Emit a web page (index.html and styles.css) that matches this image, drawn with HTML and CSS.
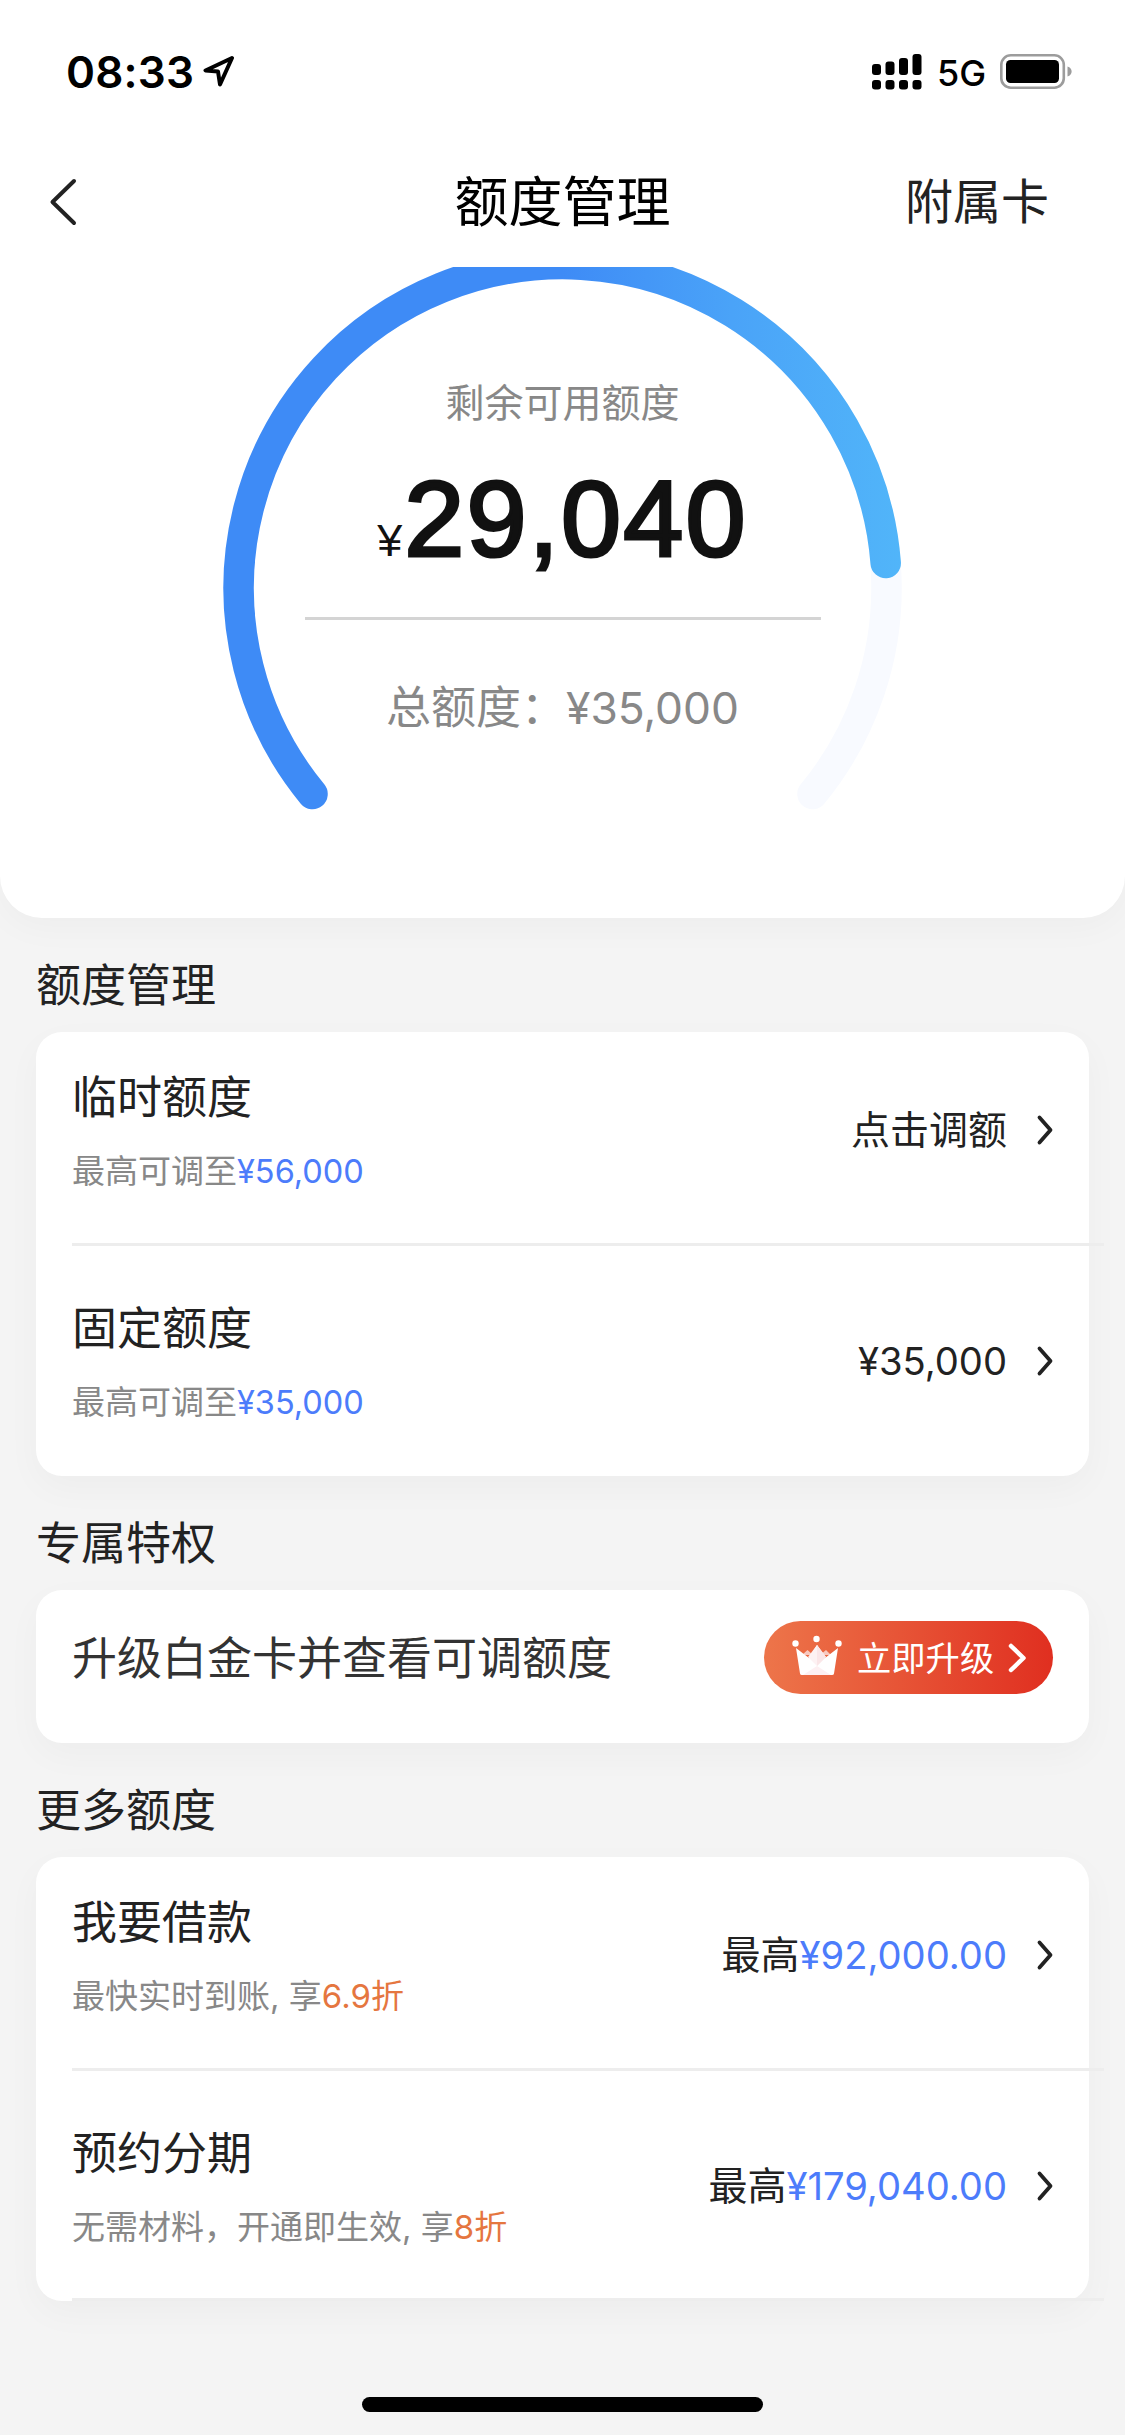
FILE: index.html
```html
<!DOCTYPE html>
<html lang="zh-CN">
<head>
<meta charset="utf-8">
<title>额度管理</title>
<link rel="stylesheet" href="styles.css">
</head>
<body>
<header class="top">
  <div class="status">
    <span class="time">08:33</span>
    <svg class="locate" width="32" height="32" viewBox="0 0 32 32"><path d="M29 3 2.500 15.500 15 16.500 17 29.500Z" fill="none" stroke="#000" stroke-width="4" stroke-linejoin="round"/></svg>
    <svg class="signal" width="50" height="36" viewBox="0 0 50 36">
      <rect x="0" y="10" width="9" height="11" rx="3"/><rect x="13.500" y="7.500" width="9" height="13.500" rx="3"/><rect x="27" y="4" width="9" height="17" rx="3"/><rect x="40.500" y="0" width="9" height="21" rx="3"/>
      <rect x="0" y="26" width="9" height="9.500" rx="3"/><rect x="13.500" y="26" width="9" height="9.500" rx="3"/><rect x="27" y="26" width="9" height="9.500" rx="3"/><rect x="40.500" y="26" width="9" height="9.500" rx="3"/>
    </svg>
    <span class="net">5G</span>
    <svg class="battery" width="73" height="36" viewBox="0 0 73 36">
      <rect x="1.300" y="1.300" width="62.500" height="32.400" rx="9.500" fill="none" stroke="#9c9c9c" stroke-width="2.600"/>
      <rect x="6" y="6" width="53" height="23" rx="4.500"/>
      <path d="M67.500 12.500c5.500 1.500 5.500 8.500 0 10z" fill="#9c9c9c"/>
    </svg>
  </div>
  <nav class="nav">
    <svg class="back" width="30" height="50" viewBox="0 0 30 50"><path d="M26 4 4.500 25 26 46" fill="none" stroke="#222" stroke-width="4" stroke-linecap="round" stroke-linejoin="round"/></svg>
    <h1 class="title">额度管理</h1>
    <a class="extra">附属卡</a>
  </nav>
  <section class="gauge">
    <svg class="ring" width="1125" height="560" viewBox="0 267 1125 560" fill="none" stroke-width="30.500" stroke-linecap="round">
      <defs><linearGradient id="arc" gradientUnits="userSpaceOnUse" x1="562" y1="0" x2="901" y2="0"><stop offset="0" stop-color="#3e8bf6"/><stop offset=".5" stop-color="#4aa3f8"/><stop offset="1" stop-color="#51b5f9"/></linearGradient></defs>
      <path d="M312.500 794A324 324 0 1 1 812.500 794" stroke="#f8faff"/>
      <path d="M312.500 794A324 324 0 1 1 885.700 563" stroke="url(#arc)"/>
    </svg>
    <div class="figures">
      <p class="label">剩余可用额度</p>
      <p class="amount"><span class="yen">¥</span>29,040</p>
      <p class="total">总额度：<span class="total-num">¥35,000</span></p>
    </div>
  </section>
</header>
<main class="main">
  <h2 class="heading">额度管理</h2>
  <section class="card">
    <div class="row">
      <div class="info"><h3 class="name">临时额度</h3><p class="sub">最高可调至<span class="blue">¥56,000</span></p></div>
      <span class="value">点击调额</span>
      <svg class="chev" width="18" height="34" viewBox="0 0 18 34"><path d="M3.500 4.500 14.500 17 3.500 29.500" /></svg>
    </div>
    <div class="row">
      <div class="info"><h3 class="name">固定额度</h3><p class="sub">最高可调至<span class="blue">¥35,000</span></p></div>
      <span class="value num">¥35,000</span>
      <svg class="chev" width="18" height="34" viewBox="0 0 18 34"><path d="M3.500 4.500 14.500 17 3.500 29.500" /></svg>
    </div>
  </section>
  <h2 class="heading">专属特权</h2>
  <section class="card promo">
    <p class="promo-text">升级白金卡并查看可调额度</p>
    <a class="upgrade">
      <svg class="crown" width="50" height="42" viewBox="0 0 50 42">
        <path d="M10 20 15.500 15 21 20ZM28 20 34 15 39 20Z" fill="#f8c9bf"/>
        <path d="M4 13 17 23 25 10 33 23 46 13 42 38.500Q41.800 40 40 40H10Q8.200 40 8 38.500Z" fill="#fff"/>
        <path d="M25 10 16 22 25 31 34 22Z" fill="#fdf2f3"/><path d="M25 10V31L34 22Z" fill="#fae6e8"/>
        <path d="M25 31 11 40H39Z" fill="#fdf0f2"/>
        <g fill="#fff"><circle cx="3.500" cy="8.500" r="3.200"/><circle cx="24.500" cy="4" r="3.200"/><circle cx="46.500" cy="8.500" r="3.200"/></g>
      </svg>
      <span class="upgrade-text">立即升级</span>
      <svg class="go" width="20" height="34" viewBox="0 0 20 34"><path d="M4 5 16.500 17 4 29" fill="none" stroke="#fff" stroke-width="4.500" stroke-linecap="round" stroke-linejoin="round"/></svg>
    </a>
  </section>
  <h2 class="heading">更多额度</h2>
  <section class="card lined">
    <div class="row">
      <div class="info"><h3 class="name">我要借款</h3><p class="sub">最快实时到账, 享<span class="orange">6.9折</span></p></div>
      <span class="value">最高<span class="blue num">¥92,000.00</span></span>
      <svg class="chev" width="18" height="34" viewBox="0 0 18 34"><path d="M3.500 4.500 14.500 17 3.500 29.500" /></svg>
    </div>
    <div class="row">
      <div class="info"><h3 class="name">预约分期</h3><p class="sub">无需材料，开通即生效, 享<span class="orange">8折</span></p></div>
      <span class="value">最高<span class="blue num">¥179,040.00</span></span>
      <svg class="chev" width="18" height="34" viewBox="0 0 18 34"><path d="M3.500 4.500 14.500 17 3.500 29.500" /></svg>
    </div>
  </section>
</main>
<footer class="home"><span class="home-bar"></span></footer>
</body>
</html>
```
FILE: styles.css
```css
* { box-sizing: border-box; }
body {
  margin: 0;
  width: 1125px;
  height: 2435px;
  display: flex;
  flex-direction: column;
  overflow: hidden;
  background: #f4f4f4;
  color: #222;
  font-family: Inter, "Noto Sans CJK SC", sans-serif;
}
h1, h2, h3, p { margin: 0; font-weight: 400; }
svg { display: block; flex: none; }

.top {
  height: 918px;
  flex: none;
  background: #fff;
  border-radius: 0 0 42px 42px;
  box-shadow: 0 9px 36px rgba(0, 0, 0, .03);
}
.status {
  height: 142px;
  padding: 2px 52px 0 66px;
  display: flex;
  align-items: center;
  color: #000;
}
.time { font-size: 44px; font-weight: 600; line-height: 60px; letter-spacing: .2px; width: 137px; white-space: nowrap; }
.locate { margin-top: -2px; }
.signal { margin-left: auto; }
.net { font-size: 36px; font-weight: 500; line-height: 44px; margin: 2px 0 0 15px; width: 48px; white-space: nowrap; }
.battery { margin-left: 15px; }
.nav {
  height: 125px;
  padding: 0 76px 5px 48px;
  display: grid;
  grid-template-columns: 1fr auto 1fr;
  align-items: center;
}
.title { font-size: 54px; line-height: 76px; color: #000; margin: 2px -14px 0 14px; }
.extra { font-size: 48px; line-height: 70px; justify-self: end; }

.gauge { display: grid; }
.ring, .figures { grid-area: 1 / 1; }
.figures { padding-top: 113px; text-align: center; color: #888; }
.label { font-size: 39px; line-height: 46px; }
.amount {
  width: 516px;
  height: 194px;
  margin: 0 auto;
  padding-top: 33px;
  border-bottom: 3px solid #d4d4d4;
  font: 400 108px/120px "Liberation Sans", sans-serif;
  letter-spacing: 2.2px;
  color: #111;
  -webkit-text-stroke: 3.2px #111;
  white-space: nowrap;
}
.yen { font-size: 45px; margin-right: 2px; letter-spacing: 0; -webkit-text-stroke: 0; }
.total { font-size: 45px; line-height: 60px; margin-top: 58px; }
.total-num { font-size: 44.3px; }

.main { flex: none; padding: 0 36px; }
.heading { font-size: 45px; line-height: 64px; height: 114px; padding-top: 36px; }
.card {
  background: #fff;
  border-radius: 26px;
  box-shadow: 0 12px 36px rgba(0, 0, 0, .032);
}
.row {
  display: flex;
  align-items: center;
  height: 214px;
  margin: 0 -15px 0 36px;
  padding: 36px 50px 50px 0;
  border-bottom: 3px solid #ededed;
}
.row + .row { height: 230px; padding: 53px 50px 52px 0; border-bottom: 0; }
.lined .row + .row { padding-bottom: 49px; border-bottom: 3px solid #ededed; }
.info { flex: 1; }
.name { font-size: 45px; line-height: 60px; }
.sub { font-size: 33px; line-height: 44px; margin-top: 21px; color: #888; }
.value { font-size: 39px; line-height: 56px; margin: -1px 29px 0 0; }
.num { font-size: 38.2px; }
.sub .blue { font-size: 32.5px; }
.blue { color: #4c7cfb; }
.orange { color: #e5763f; }
.chev { margin-top: -2px; }
.chev path { fill: none; stroke: #222; stroke-width: 3.8; stroke-linecap: round; stroke-linejoin: round; }

.promo {
  height: 153px;
  padding: 31px 36px 0;
  display: flex;
  align-items: flex-start;
  justify-content: space-between;
}
.promo-text { font-size: 45px; line-height: 76px; color: #333; }
.upgrade {
  width: 289px;
  height: 73px;
  padding-left: 28px;
  border-radius: 37px;
  display: flex;
  align-items: center;
  color: #fff;
  background: linear-gradient(90deg, #ed754a, #e02f20);
}
.crown { margin-top: -3px; }
.upgrade-text { font-size: 34.3px; line-height: 50px; margin: 2px 0 0 15px; }
.go { margin-left: 13px; }

.home { flex: 1; display: flex; align-items: flex-end; justify-content: center; padding-bottom: 23px; }
.home-bar { width: 401px; height: 15px; border-radius: 8px; background: #000; }
```
